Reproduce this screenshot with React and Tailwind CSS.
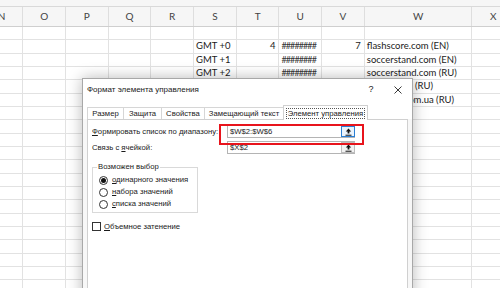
import React from 'react'

// Excel sheet with the "Формат элемента управления" dialog on top

const letters = ['N', 'O', 'P', 'Q', 'R', 'S', 'T', 'U', 'V', 'W', 'X']

const rows = [
  {},
  { S: 'GMT +0', T: '4', U: '########', V: '7', W: 'flashscore.com (EN)' },
  { S: 'GMT +1', U: '########', W: 'soccerstand.com (EN)' },
  { S: 'GMT +2', U: '########', W: 'soccerstand.com (RU)' },
  { S: 'GMT +3', U: '########', W: 'myscore.ru (RU)' },
  { S: 'GMT +4', U: '########', W: 'myscore.com.ua (RU)' },
]

const gridCols = 'grid grid-cols-[repeat(9,42.7px)_107.7px_42.7px] -ml-[19.4px]'

function Sheet() {
  const all = [...rows, ...Array.from({ length: 15 }, () => ({}))]
  return (
    <div className="font-['Lato',sans-serif] text-[9.5px] text-[#1b1b1b]">
      <div className="h-[7px] bg-[#f6f6f6] border-b border-[#d9d9d9]" />
      <div className={`${gridCols} h-[20px] bg-[#f6f6f6] border-b border-[#cfcfcf]`}>
        {letters.map((l) => (
          <div key={l} className="flex items-center justify-center border-r border-[#dedede] text-[10px] text-[#444]">
            {l}
          </div>
        ))}
      </div>
      {all.map((r, i) => (
        <div key={i} className={`${gridCols} h-[13.333px]`}>
          {letters.map((l) => {
            const v = r[l]
            const right = l === 'T' || l === 'V'
            const hash = l === 'U'
            return (
              <div
                key={l}
                className={`relative border-r border-b border-[#e2e2e2] leading-[12px] whitespace-nowrap ${
                  right ? 'text-right pr-[3px]' : 'pl-[2px]'
                } ${hash ? 'overflow-hidden tracking-[-0.9px] text-[9px] text-[#333]' : ''}`}
              >
                {v}
              </div>
            )
          })}
        </div>
      ))}
    </div>
  )
}

function PickIcon() {
  return (
    <svg width="7" height="8" viewBox="0 0 7 8" className="block">
      <path d="M3.5 0.5 L0.8 3.4 H2.6 V5.6 H4.4 V3.4 H6.2 Z" fill="#111" />
      <rect x="0.5" y="6.7" width="6" height="1" fill="#111" />
    </svg>
  )
}

function RangeBox({ value, active }) {
  return (
    <div className="flex items-center w-[128px] h-[13px] border border-[#b4b4b4] bg-white">
      <span className="flex-1 pl-[2px] leading-[11px]">{value}</span>
      <div
        className={`flex items-center justify-center w-[14px] h-[11px] mr-[-1px] border ${
          active ? 'border-[#2a7fd4] bg-[#eaf3fc]' : 'border-[#bdbdbd] bg-[#f2f2f2]'
        }`}
      >
        <PickIcon />
      </div>
    </div>
  )
}

function Radio({ checked, first, rest }) {
  return (
    <div className="flex items-center h-[12px]">
      <span className="flex items-center justify-center w-[9px] h-[9px] rounded-full border border-[#333] bg-white">
        {checked && <span className="w-[5px] h-[5px] rounded-full bg-[#111]" />}
      </span>
      <span className="ml-[4px]">
        <span className="underline underline-offset-1">{first}</span>
        {rest}
      </span>
    </div>
  )
}

function Dialog() {
  const tabs = [
    { label: 'Размер', w: 'w-[37px]' },
    { label: 'Защита', w: 'w-[39px]' },
    { label: 'Свойства', w: 'w-[44px]' },
    { label: 'Замещающий текст', w: 'w-[80px]' },
  ]
  return (
    <div className="absolute left-[82px] top-[78px] w-[331px] h-[230px] bg-[#f7f7f7] border border-[#a8a8a8] shadow-[0_0_14px_rgba(0,0,0,0.28)] font-['Liberation_Sans',sans-serif] text-[7.7px] text-[#1a1a1a] whitespace-nowrap">
      <div className="flex items-center h-[21px] bg-white pl-[4px]">
        <span className="flex-1 text-[8px]">Формат элемента управления</span>
        <span className="w-[12px] text-center text-[9px] mr-[17px]">?</span>
        <svg width="8" height="8" viewBox="0 0 8 8" className="mr-[10px]">
          <path d="M0.5 0.5 L7.5 7.5 M7.5 0.5 L0.5 7.5" stroke="#222" strokeWidth="0.9" />
        </svg>
      </div>
      <div className="flex items-end h-[19px] pl-[4px] bg-white">
        {tabs.map((t) => (
          <div
            key={t.label}
            className={`${t.w} h-[12px] flex items-center justify-center bg-white border border-b-0 border-[#d6d6d6] -mr-px`}
          >
            {t.label}
          </div>
        ))}
        <div className="relative z-10 w-[85px] h-[15px] -mb-px flex items-center justify-center bg-white border border-b-0 border-[#d0d0d0]">
          <span className="px-[1px] border border-dotted border-[#555] leading-[9px]">Элемент управления</span>
        </div>
      </div>
      <div className="relative mx-[4px] h-[200px] bg-white border border-[#d0d0d0] pt-[5px] pl-[4px]">
        <div className="flex items-center">
          <span className="w-[135px]">
            <span className="underline underline-offset-1">Ф</span>ормировать список по диапазону:
          </span>
          <RangeBox value="$W$2:$W$6" active />
        </div>
        <div className="flex items-center mt-[3px]">
          <span className="w-[135px]">
            Связь с <span className="underline underline-offset-1">я</span>чейкой:
          </span>
          <RangeBox value="$X$2" />
        </div>
        <div className="absolute left-[131px] top-[4px] w-[145px] h-[21px] border-2 border-[#e8141c]" />

        <div className="relative mt-[13px] w-[106px] h-[46px] border border-[#d9d9d9] pt-[6px] pl-[6px]">
          <span className="absolute left-[4px] -top-[6px] bg-white px-[1px] leading-[10px]">Возможен выбор</span>
          <Radio checked first="о" rest="динарного значения" />
          <Radio first="н" rest="абора значений" />
          <Radio first="с" rest="писка значений" />
        </div>

        <div className="flex items-center mt-[8px]">
          <span className="w-[9px] h-[9px] border border-[#333] bg-white" />
          <span className="ml-[3px]">
            <span className="underline underline-offset-1">О</span>бъемное затенение
          </span>
        </div>
      </div>
    </div>
  )
}

export default function App() {
  return (
    <div className="relative w-[500px] h-[288px] overflow-hidden bg-white">
      <Sheet />
      <Dialog />
    </div>
  )
}
